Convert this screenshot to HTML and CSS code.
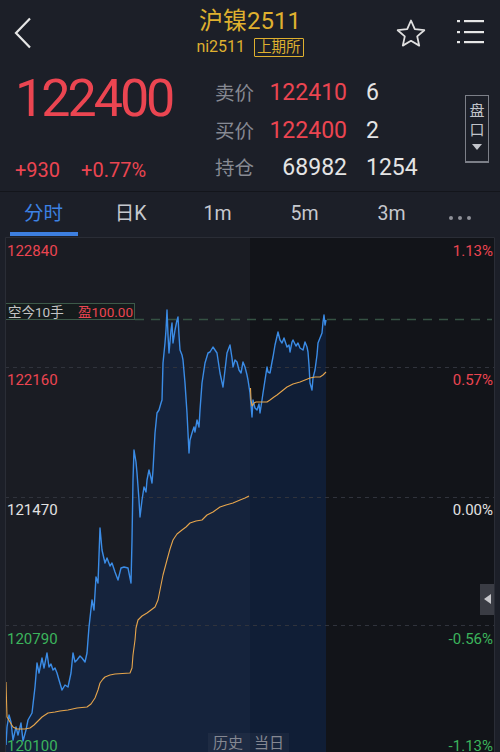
FILE: index.html
```html
<!DOCTYPE html>
<html lang="zh-CN">
<head>
    <meta charset="UTF-8">
    <meta name="viewport" content="width=device-width, initial-scale=1.0">
    <title>沪镍2511</title>
    <link rel="stylesheet" href="styles.css">
</head>
<body>
    <header class="topbar">
        <div class="nav-left">
            <svg class="back" width="18" height="32" viewBox="0 0 18 32"><path d="M16 1.5 L2 16 L16 30.5" fill="none" stroke="#e6e6e6" stroke-width="2.2"/></svg>
        </div>
        <div class="title-block">
            <div class="title">沪镍2511</div>
            <div class="subtitle">ni2511<span class="exchange">上期所</span></div>
        </div>
        <div class="nav-right">
            <svg width="30" height="28" viewBox="0 0 30 28"><polygon points="15,1.5 18.8,10.2 28.3,11.2 21.2,17.4 23.2,26.6 15,21.8 6.8,26.6 8.8,17.4 1.7,11.2 11.2,10.2" fill="none" stroke="#e0e0e0" stroke-width="1.8" stroke-linejoin="round"/></svg>
            <svg width="27" height="26" viewBox="0 0 27 26"><g fill="#e6e6e6"><rect x="0" y="1" width="3" height="2.2"/><rect x="0" y="12" width="3" height="2.2"/><rect x="0" y="22" width="3" height="2.2"/><rect x="7" y="1" width="20" height="2.2"/><rect x="7" y="12" width="20" height="2.2"/><rect x="7" y="22" width="20" height="2.2"/></g></svg>
        </div>
    </header>

    <section class="quote">
        <div class="price-col">
            <div class="last-price">122400</div>
            <div class="change"><span>+930</span><span>+0.77%</span></div>
        </div>
        <div class="book">
            <span class="lbl">卖价</span><span class="val up">122410</span><span class="qty">6</span>
            <span class="lbl">买价</span><span class="val up">122400</span><span class="qty">2</span>
            <span class="lbl">持仓</span><span class="val">68982</span><span class="qty">1254</span>
        </div>
        <div class="depth-toggle">
            <span>盘</span><span>口</span><i class="caret"></i>
        </div>
    </section>

    <nav class="tabs">
        <div class="tab active">分时</div>
        <div class="tab">日K</div>
        <div class="tab">1m</div>
        <div class="tab">5m</div>
        <div class="tab">3m</div>
        <div class="more">
            <svg width="24" height="6" viewBox="0 0 24 6"><g fill="#8e9098"><circle cx="3" cy="3" r="2"/><circle cx="12" cy="3" r="2"/><circle cx="21" cy="3" r="2"/></g></svg>
        </div>
    </nav>

    <div class="chart">
        <svg class="plot" width="490" height="515" viewBox="5 237 490 515">
            <rect x="5" y="237" width="245" height="515" fill="#1a1c23"/>
            <rect x="250" y="237" width="245" height="515" fill="#121419"/>

            <path class="area" d="M6 745 L7 727 L9 715 L11 722 L13 740 L16 727 L18 735 L21 723 L23 741 L26 730 L28 720 L32 713 L35 687 L37 663 L39 673 L42 658 L44 668 L47 653 L49 667 L51 664 L53 670 L55 668 L57 673 L59 680 L62 690 L65 685 L68 687 L71 673 L73 653 L75 662 L77 660 L80 656 L82 658 L85 662 L87 653 L89 627 L92 600 L94 610 L96 577 L98 583 L100 528 L102 550 L105 563 L107 558 L110 566 L112 563 L115 572 L118 580 L121 568 L124 567 L128 568 L131 583 L132 540 L133 480 L134 450 L136 462 L137 473 L139 500 L140 517 L142 500 L144 487 L146 492 L147 480 L149 470 L151 478 L152 483 L153 470 L155 433 L157 413 L159 410 L161 403 L162 400 L163 363 L165 343 L166 330 L167 310 L168 335 L169 353 L171 330 L172 323 L173 343 L175 330 L177 320 L178 317 L179 335 L180 350 L182 355 L183 360 L185 383 L187 413 L189 453 L190 440 L192 433 L194 427 L195 432 L197 420 L199 427 L200 410 L202 383 L205 363 L208 353 L210 352 L213 347 L215 350 L217 353 L220 373 L223 387 L225 370 L227 353 L230 345 L232 358 L233 367 L235 360 L237 362 L239 370 L241 373 L243 362 L245 367 L247 375 L248 380 L250 393 L251 405 L252 417 L253 400 L255 408 L257 410 L259 404 L260 413 L262 400 L263 393 L265 380 L267 367 L268 372 L270 373 L272 362 L273 357 L275 345 L278 332 L280 340 L282 343 L284 338 L287 347 L289 345 L290 352 L292 342 L293 340 L296 346 L298 343 L300 348 L303 350 L305 342 L307 347 L308 352 L309 365 L310 383 L312 390 L313 378 L315 370 L317 355 L318 343 L320 338 L322 333 L323 322 L324 315 L325 325 L326 320 L326 752 L6 752 Z"/>

            <g class="grid">
                <line x1="5" y1="367.5" x2="495" y2="367.5"/>
                <line x1="5" y1="497.5" x2="495" y2="497.5"/>
                <line x1="5" y1="625.5" x2="495" y2="625.5"/>
            </g>

            <line class="hold-line" x1="135" y1="319.5" x2="492" y2="319.5"/>
            <rect class="hold-box" x="5.5" y="303.5" width="129" height="16"/>
            <text class="hold-text" x="8" y="317">空今10手</text>
            <text class="hold-text up" x="78" y="317">盈100.00</text>

            <path class="price-line" d="M6 745 L7 727 L9 715 L11 722 L13 740 L16 727 L18 735 L21 723 L23 741 L26 730 L28 720 L32 713 L35 687 L37 663 L39 673 L42 658 L44 668 L47 653 L49 667 L51 664 L53 670 L55 668 L57 673 L59 680 L62 690 L65 685 L68 687 L71 673 L73 653 L75 662 L77 660 L80 656 L82 658 L85 662 L87 653 L89 627 L92 600 L94 610 L96 577 L98 583 L100 528 L102 550 L105 563 L107 558 L110 566 L112 563 L115 572 L118 580 L121 568 L124 567 L128 568 L131 583 L132 540 L133 480 L134 450 L136 462 L137 473 L139 500 L140 517 L142 500 L144 487 L146 492 L147 480 L149 470 L151 478 L152 483 L153 470 L155 433 L157 413 L159 410 L161 403 L162 400 L163 363 L165 343 L166 330 L167 310 L168 335 L169 353 L171 330 L172 323 L173 343 L175 330 L177 320 L178 317 L179 335 L180 350 L182 355 L183 360 L185 383 L187 413 L189 453 L190 440 L192 433 L194 427 L195 432 L197 420 L199 427 L200 410 L202 383 L205 363 L208 353 L210 352 L213 347 L215 350 L217 353 L220 373 L223 387 L225 370 L227 353 L230 345 L232 358 L233 367 L235 360 L237 362 L239 370 L241 373 L243 362 L245 367 L247 375 L248 380 L250 393 L251 405 L252 417 L253 400 L255 408 L257 410 L259 404 L260 413 L262 400 L263 393 L265 380 L267 367 L268 372 L270 373 L272 362 L273 357 L275 345 L278 332 L280 340 L282 343 L284 338 L287 347 L289 345 L290 352 L292 342 L293 340 L296 346 L298 343 L300 348 L303 350 L305 342 L307 347 L308 352 L309 365 L310 383 L312 390 L313 378 L315 370 L317 355 L318 343 L320 338 L322 333 L323 322 L324 315 L325 325 L326 320"/>

            <path class="avg-line" d="M6 682 L6.5 700 L7 717 L10 722 L13 727 L17 729 L25 729 L30 728 L34 725 L37 722 L42 717 L48 713 L55 712 L60 711 L68 710 L77 708 L87 707 L91 704 L95 698 L98 690 L100 683 L103 679 L105 677 L110 675 L115 674 L130 673 L132 668 L133 655 L135 640 L136 628 L138 620 L142 616 L147 613 L151 610 L155 607 L158 600 L160 590 L163 575 L167 560 L170 549 L173 540 L177 534 L182 530 L186 527 L190 523 L196 521 L202 520 L207 515 L213 512 L220 507 L226 505 L233 503 L240 500 L245 498 L249 496"/>
            <path class="avg-line" d="M250.5 388 L251 400 L252 406 L254 403 L256 402 L267 402 L270 400 L274 397 L277 395 L282 391 L287 387 L293 384 L300 382 L305 380 L310 378 L315 377 L320 377 L323 375 L326 372"/>

            <path class="frame" d="M5.5 752 V237.5 H494.5 V752"/>

            <g class="axis">
                <text class="up" x="7" y="256">122840</text>
                <text class="up end" x="493" y="256">1.13%</text>
                <text class="up" x="7" y="385">122160</text>
                <text class="up end" x="493" y="385">0.57%</text>
                <text class="flat" x="7" y="515">121470</text>
                <text class="flat end" x="493" y="515">0.00%</text>
                <text class="down" x="7" y="644">120790</text>
                <text class="down end" x="493" y="644">-0.56%</text>
                <text class="down" x="7" y="751">120100</text>
                <text class="down end" x="493" y="751">-1.13%</text>
            </g>
        </svg>

        <div class="side-tab"><i></i></div>
        <div class="session"><span>历史</span><span>当日</span></div>
    </div>
</body>
</html>
```

FILE: styles.css
```css
body {
    margin: 0;
    width: 500px;
    height: 752px;
    overflow: hidden;
    background-color: #1c1f28;
    color: #e4e4e4;
    font-family: Roboto, "Noto Sans CJK SC", sans-serif;
}

/* header */
.topbar {
    display: grid;
    grid-template-columns: 1fr auto 1fr;
    height: 65px;
}
.nav-left {
    padding: 17px 0 0 14px;
}
.title-block {
    text-align: center;
    color: #dfb02f;
}
.title {
    font-size: 24px;
    line-height: 28px;
    padding-top: 7px;
}
.subtitle {
    font-size: 16px;
    line-height: 20px;
    margin-top: 2px;
}
.exchange {
    display: inline-block;
    margin-left: 9px;
    padding: 0 2px;
    font-size: 14.5px;
    line-height: 17px;
    border: 1px solid #dfb02f;
    border-radius: 1px;
}
.nav-right {
    display: flex;
    justify-content: flex-end;
    align-items: flex-start;
    gap: 31px;
    padding: 19px 16px 0 0;
}

/* quote */
.quote {
    display: flex;
    height: 126px;
    padding-left: 15px;
    border-bottom: 1px solid #13151b;
}
.price-col {
    width: 200px;
}
.last-price {
    margin-top: 8px;
    font-size: 52px;
    line-height: 52px;
    letter-spacing: -3px;
    color: #eb4551;
}
.change {
    display: flex;
    gap: 21px;
    margin-top: 35px;
    font-size: 20px;
    line-height: 20px;
    color: #eb4551;
}
.book {
    display: grid;
    grid-template-columns: 52px 80px auto;
    grid-auto-rows: 37.5px;
    align-items: baseline;
    padding-top: 9px;
    font-size: 23px;
    line-height: 37px;
}
.book .lbl {
    font-size: 19.5px;
    color: #878a93;
}
.book .val {
    text-align: right;
    color: #e4e4e4;
}
.book .up {
    color: #eb4551;
}
.book .qty {
    padding-left: 19px;
    color: #e4e4e4;
}
.depth-toggle {
    display: flex;
    flex-direction: column;
    align-items: center;
    box-sizing: border-box;
    width: 24px;
    height: 68px;
    margin: 30px 11px 0 auto;
    padding-top: 6px;
    border: 1px solid #7c7f88;
    border-bottom-width: 2px;
    font-size: 15px;
    line-height: 19px;
    color: #c2c4ca;
}
.caret {
    margin-top: 4px;
    border-left: 5px solid transparent;
    border-right: 5px solid transparent;
    border-top: 6px solid #c2c4ca;
}

/* period tabs */
.tabs {
    display: flex;
    height: 45px;
}
.tab {
    position: relative;
    width: 87px;
    text-align: center;
    font-size: 19.5px;
    line-height: 43px;
    color: #c6c8ce;
}
.tab.active {
    color: #3d82e4;
}
.tab.active::after {
    content: "";
    position: absolute;
    left: 10px;
    right: 9px;
    bottom: 1px;
    height: 4px;
    background-color: #3d7fe0;
}
.more {
    padding: 14px 0 0 13px;
}

/* intraday chart */
.chart {
    position: relative;
    height: 515px;
    margin: 0 5px;
}
.plot {
    display: block;
}
.area {
    fill: rgba(15, 45, 95, 0.42);
}
.grid line {
    stroke: #30333c;
    stroke-width: 1;
    stroke-dasharray: 4 4;
}
.hold-line {
    stroke: #355243;
    stroke-width: 1.5;
    stroke-dasharray: 9 7;
}
.hold-box {
    fill: rgba(18, 26, 24, 0.6);
    stroke: #3d5a49;
    stroke-width: 1;
}
.hold-text {
    font-size: 13.5px;
    fill: #c4c4c4;
}
.hold-text.up {
    fill: #eb4551;
}
.price-line {
    fill: none;
    stroke: #3b8ce6;
    stroke-width: 1.4;
    stroke-linejoin: round;
}
.avg-line {
    fill: none;
    stroke: #e6a54c;
    stroke-width: 1.1;
    stroke-linejoin: round;
}
.frame {
    fill: none;
    stroke: #2a2d36;
    stroke-width: 1;
}
.axis text {
    font-size: 15px;
}
.axis .end {
    text-anchor: end;
}
.axis .up {
    fill: #eb4551;
}
.axis .flat {
    fill: #e2e2e2;
}
.axis .down {
    fill: #3cb45c;
}
.side-tab {
    position: absolute;
    right: 1px;
    top: 347px;
    width: 14px;
    height: 31px;
    background-color: #3a3c44;
}
.side-tab i {
    position: absolute;
    left: 4px;
    top: 10px;
    border-top: 5px solid transparent;
    border-bottom: 5px solid transparent;
    border-right: 7px solid #c8c8cc;
}
.session {
    position: absolute;
    left: 203px;
    bottom: 0;
    display: flex;
    gap: 11px;
    padding: 0 5px;
    height: 19px;
    background-color: rgba(255, 255, 255, 0.04);
    font-size: 15px;
    line-height: 20px;
    color: #858892;
}
```
